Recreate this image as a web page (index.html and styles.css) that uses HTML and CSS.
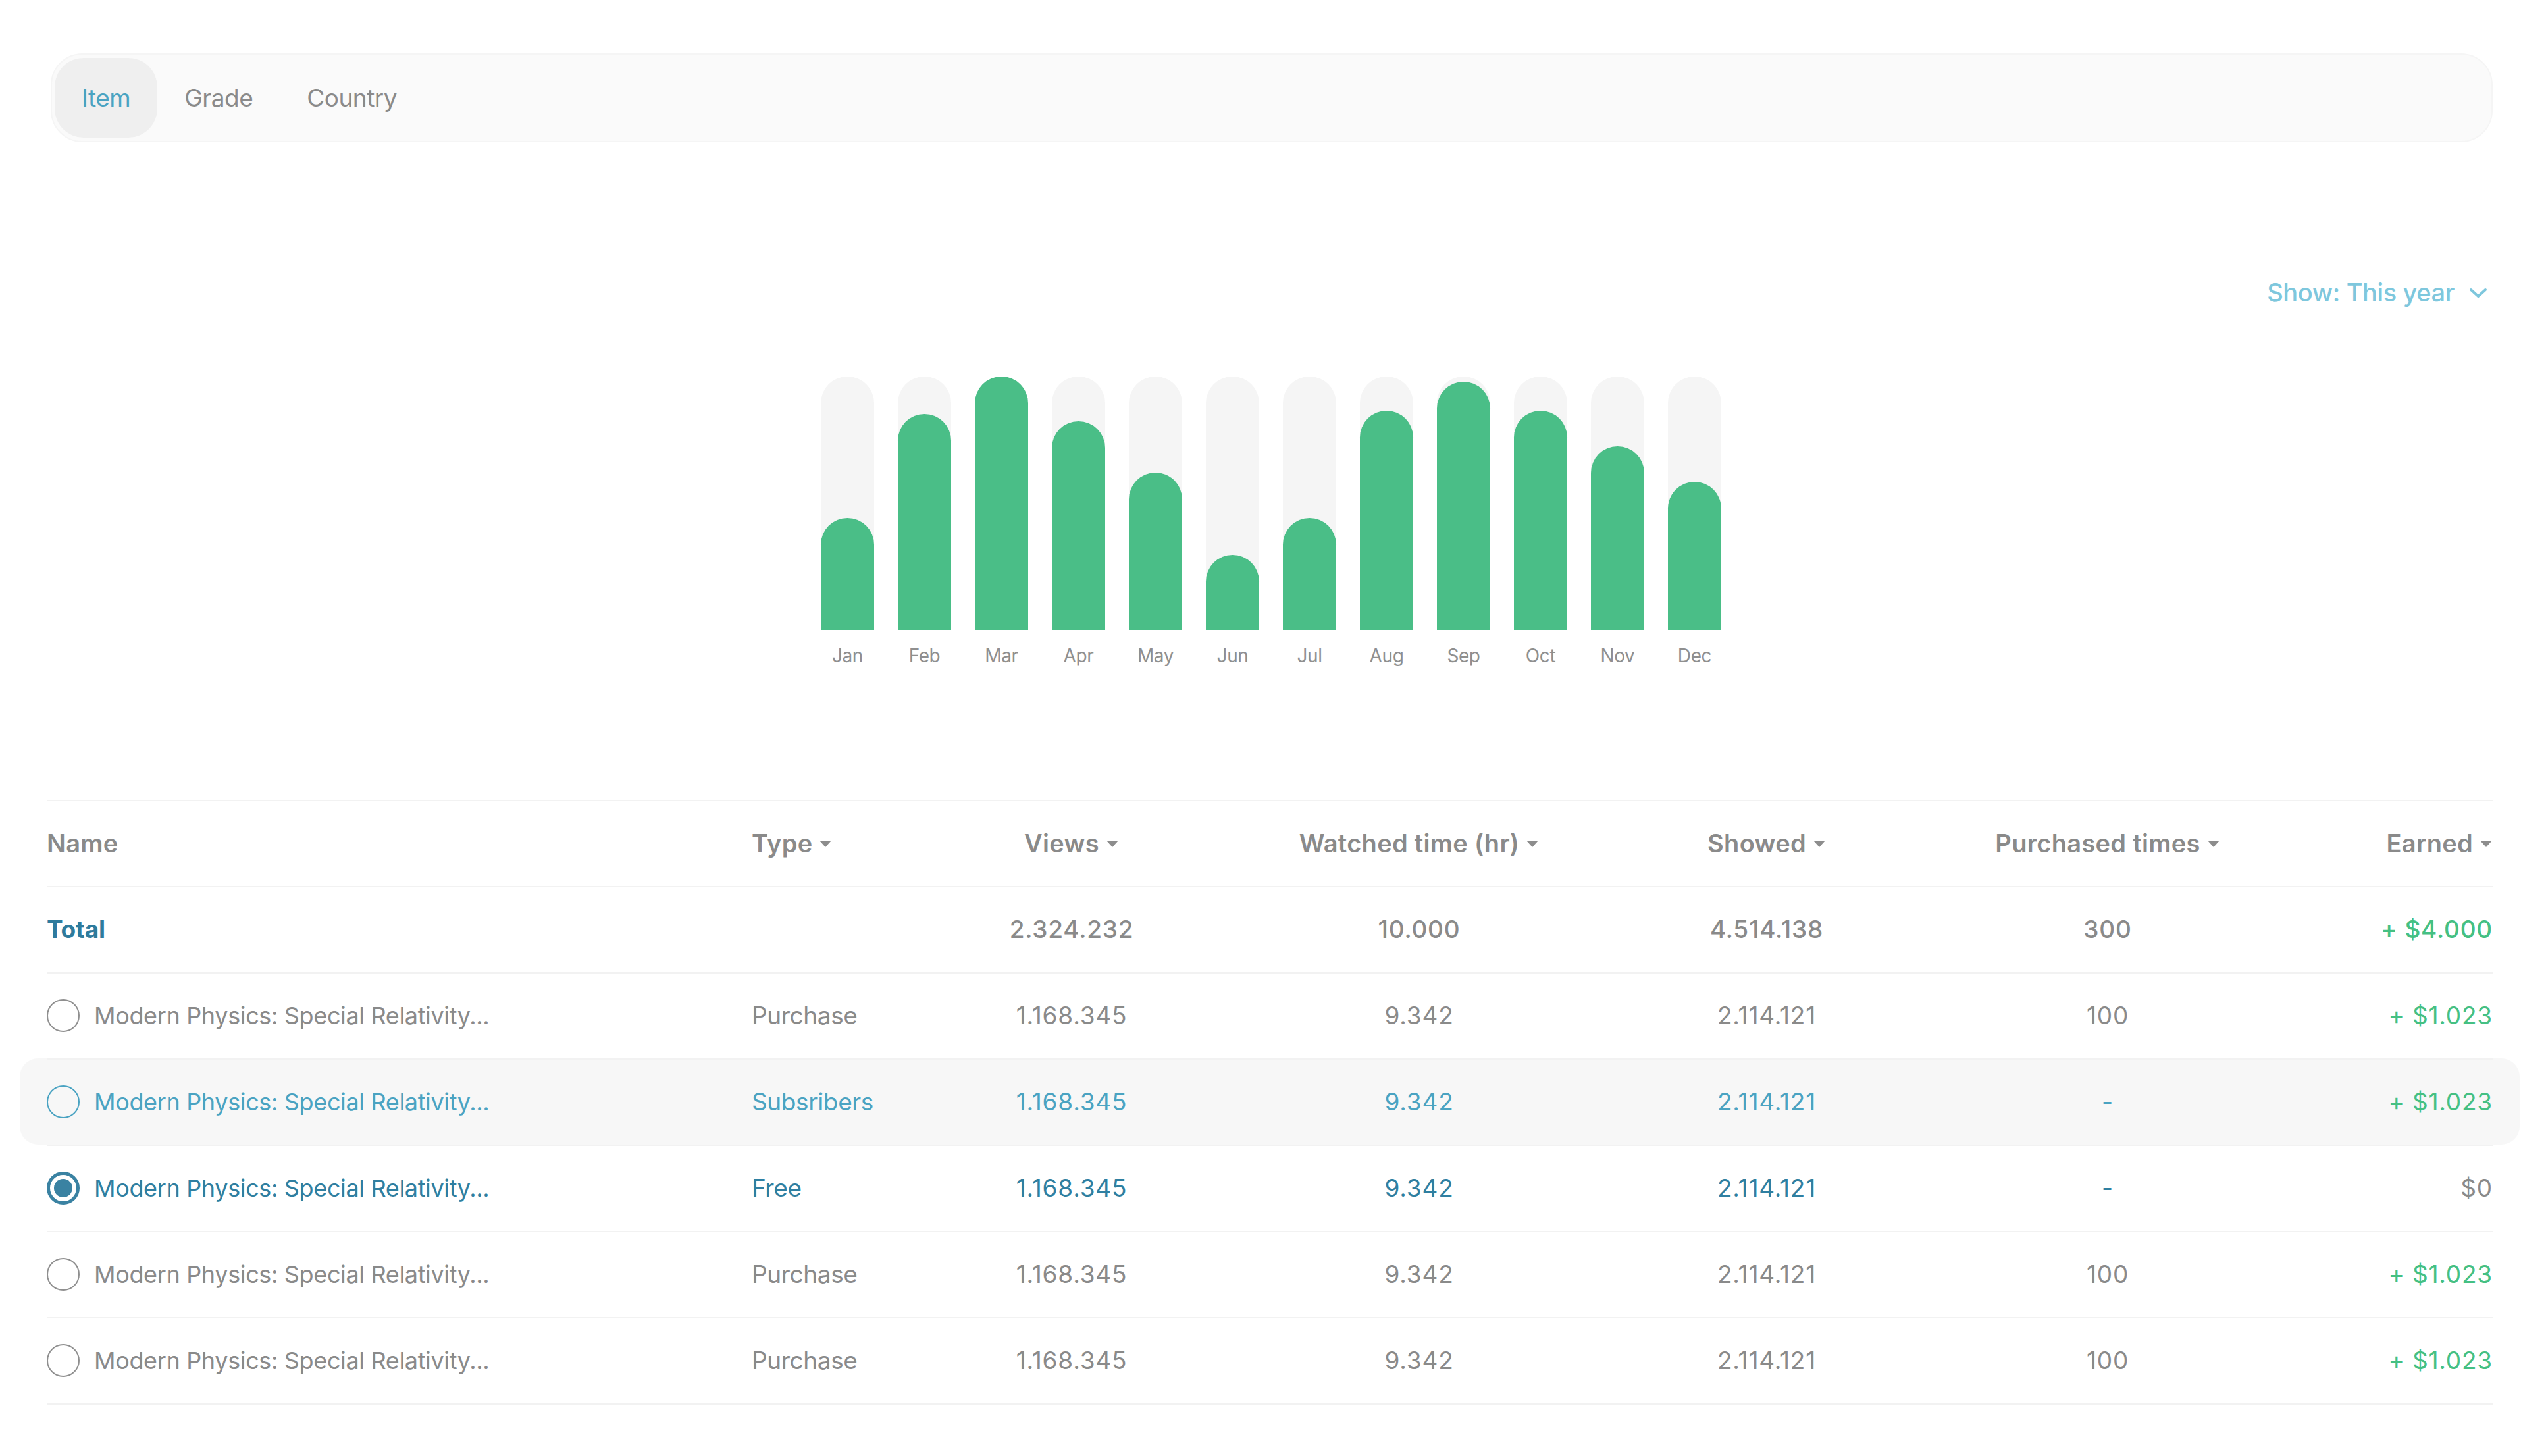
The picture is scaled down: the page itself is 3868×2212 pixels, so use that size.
FILE: index.html
```html
<!DOCTYPE html>
<html lang="en">
<head>
<meta charset="utf-8">
<title>Earnings</title>
<link rel="stylesheet" href="styles.css">
</head>
<body>
<div class="page">
  <nav class="tabs">
    <span class="tab active">Item</span>
    <span class="tab">Grade</span>
    <span class="tab">Country</span>
  </nav>

  <div class="filter">
    <span class="filter-label">Show: This year</span>
    <svg class="chev" width="28" height="16" viewBox="0 0 28 16"><polyline points="3,3 14,13 25,3" fill="none" stroke="#7ec7dd" stroke-width="4" stroke-linecap="round" stroke-linejoin="round"/></svg>
  </div>

  <div class="chart">
    <div class="col"><div class="track"><div class="fill" style="height:44.2%"></div></div><span class="lbl">Jan</span></div>
    <div class="col"><div class="track"><div class="fill" style="height:85.2%"></div></div><span class="lbl">Feb</span></div>
    <div class="col"><div class="track"><div class="fill" style="height:100%"></div></div><span class="lbl">Mar</span></div>
    <div class="col"><div class="track"><div class="fill" style="height:82.3%"></div></div><span class="lbl">Apr</span></div>
    <div class="col"><div class="track"><div class="fill" style="height:62.1%"></div></div><span class="lbl">May</span></div>
    <div class="col"><div class="track"><div class="fill" style="height:29.6%"></div></div><span class="lbl">Jun</span></div>
    <div class="col"><div class="track"><div class="fill" style="height:44.2%"></div></div><span class="lbl">Jul</span></div>
    <div class="col"><div class="track"><div class="fill" style="height:86.5%"></div></div><span class="lbl">Aug</span></div>
    <div class="col"><div class="track"><div class="fill" style="height:97.9%"></div></div><span class="lbl">Sep</span></div>
    <div class="col"><div class="track"><div class="fill" style="height:86.5%"></div></div><span class="lbl">Oct</span></div>
    <div class="col"><div class="track"><div class="fill" style="height:72.5%"></div></div><span class="lbl">Nov</span></div>
    <div class="col"><div class="track"><div class="fill" style="height:58.4%"></div></div><span class="lbl">Dec</span></div>
  </div>

  <div class="table">
    <div class="row head">
      <div class="cell">Name</div>
      <div class="cell"><span class="sort">Type<svg class="tri" viewBox="0 0 20 12"><polygon points="1,1 19,1 10,11" fill="#8d8d8d"/></svg></span></div>
      <div class="cell ctr"><span class="sort">Views<svg class="tri" viewBox="0 0 20 12"><polygon points="1,1 19,1 10,11" fill="#8d8d8d"/></svg></span></div>
      <div class="cell ctr"><span class="sort">Watched time (hr)<svg class="tri" viewBox="0 0 20 12"><polygon points="1,1 19,1 10,11" fill="#8d8d8d"/></svg></span></div>
      <div class="cell ctr"><span class="sort">Showed<svg class="tri" viewBox="0 0 20 12"><polygon points="1,1 19,1 10,11" fill="#8d8d8d"/></svg></span></div>
      <div class="cell ctr"><span class="sort">Purchased times<svg class="tri" viewBox="0 0 20 12"><polygon points="1,1 19,1 10,11" fill="#8d8d8d"/></svg></span></div>
      <div class="cell end"><span class="sort">Earned<svg class="tri" viewBox="0 0 20 12"><polygon points="1,1 19,1 10,11" fill="#8d8d8d"/></svg></span></div>
    </div>

    <div class="row total">
      <div class="cell total-name">Total</div>
      <div class="cell"></div>
      <div class="cell ctr num">2.324.232</div>
      <div class="cell ctr num">10.000</div>
      <div class="cell ctr num">4.514.138</div>
      <div class="cell ctr num">300</div>
      <div class="cell end num green">+ $4.000</div>
    </div>

    <div class="row">
      <div class="cell name"><span class="radio"></span>Modern Physics: Special Relativity...</div>
      <div class="cell">Purchase</div>
      <div class="cell ctr num">1.168.345</div>
      <div class="cell ctr num">9.342</div>
      <div class="cell ctr num">2.114.121</div>
      <div class="cell ctr num">100</div>
      <div class="cell end num green">+ $1.023</div>
    </div>

    <div class="row hover">
      <div class="cell name"><span class="radio"></span>Modern Physics: Special Relativity...</div>
      <div class="cell">Subsribers</div>
      <div class="cell ctr num">1.168.345</div>
      <div class="cell ctr num">9.342</div>
      <div class="cell ctr num">2.114.121</div>
      <div class="cell ctr num">-</div>
      <div class="cell end num green">+ $1.023</div>
    </div>

    <div class="row selected">
      <div class="cell name"><span class="radio"></span>Modern Physics: Special Relativity...</div>
      <div class="cell">Free</div>
      <div class="cell ctr num">1.168.345</div>
      <div class="cell ctr num">9.342</div>
      <div class="cell ctr num">2.114.121</div>
      <div class="cell ctr num">-</div>
      <div class="cell end num gray">$0</div>
    </div>

    <div class="row">
      <div class="cell name"><span class="radio"></span>Modern Physics: Special Relativity...</div>
      <div class="cell">Purchase</div>
      <div class="cell ctr num">1.168.345</div>
      <div class="cell ctr num">9.342</div>
      <div class="cell ctr num">2.114.121</div>
      <div class="cell ctr num">100</div>
      <div class="cell end num green">+ $1.023</div>
    </div>

    <div class="row">
      <div class="cell name"><span class="radio"></span>Modern Physics: Special Relativity...</div>
      <div class="cell">Purchase</div>
      <div class="cell ctr num">1.168.345</div>
      <div class="cell ctr num">9.342</div>
      <div class="cell ctr num">2.114.121</div>
      <div class="cell ctr num">100</div>
      <div class="cell end num green">+ $1.023</div>
    </div>
  </div>
</div>
</body>
</html>
```

FILE: styles.css
```css
* { box-sizing: border-box; }

html, body {
  margin: 0;
  padding: 0;
  background: #ffffff;
}

body {
  font-family: "Inter", "Liberation Sans", sans-serif;
  color: #8a8a8a;
  width: 3868px;
  height: 2212px;
  overflow: hidden;
}

.page {
  padding: 81px 81px 0 71px;
}

/* Tabs */
.tabs {
  margin-left: 6px;
  height: 135px;
  padding: 5px 4px;
  display: flex;
  align-items: stretch;
  background: #fafafa;
  border: 2px solid #f5f5f5;
  border-radius: 48px;
}

.tab {
  display: flex;
  align-items: center;
  padding: 0 41px;
  font-size: 37px;
  color: #8a8a8a;
  border-radius: 44px;
  letter-spacing: -0.5px;
}

.tab.active {
  background: #efefef;
  color: #4aa3c2;
}

/* Filter */
.filter {
  margin-top: 205px;
  height: 46px;
  display: flex;
  justify-content: flex-end;
  align-items: center;
  gap: 22px;
  padding-right: 8px;
}

.filter-label {
  font-size: 38px;
  font-weight: 500;
  color: #7ec7dd;
  letter-spacing: -0.4px;
  line-height: 46px;
}

.chev { display: block; margin-top: 2px; }

/* Chart */
.chart {
  margin-top: 105px;
  display: flex;
  justify-content: center;
  gap: 36px;
  padding-left: 4px;
}

.col {
  width: 81px;
  display: flex;
  flex-direction: column;
  align-items: center;
}

.track {
  width: 81px;
  height: 385px;
  background: #f5f5f5;
  border-radius: 41px 41px 0 0;
  display: flex;
  flex-direction: column;
  justify-content: flex-end;
}

.fill {
  width: 100%;
  background: #4abe87;
  border-radius: 41px 41px 0 0;
}

.lbl {
  margin-top: 22px;
  font-size: 28px;
  line-height: 34px;
  color: #8f8f8f;
  letter-spacing: -0.4px;
}

/* Table */
.table {
  margin-top: 202px;
  border-bottom: 2px solid #f2f2f2;
}

.row {
  display: grid;
  grid-template-columns: 1071px 223px 526px 530px 526px 510px 330px;
  align-items: center;
  height: 131px;
  font-size: 37px;
  letter-spacing: -0.4px;
  color: #8a8a8a;
  background: linear-gradient(#f2f2f2, #f2f2f2) top left / 100% 2px no-repeat;
}

.cell { white-space: nowrap; }
.ctr { text-align: center; }
.end { text-align: right; }

.num {
  letter-spacing: 0.8px;
}

.head {
  font-weight: 600;
  font-size: 38px;
  letter-spacing: 0.3px;
  color: #8a8a8a;
}

.sort {
  display: inline-flex;
  align-items: center;
  gap: 10px;
}

.tri { width: 20px; height: 12px; display: block; margin-top: 2px; }

.total { font-weight: 500; }
.total-name { font-weight: 700; color: #2e7b9d; letter-spacing: -0.2px; }

.green { color: #45c083; }
.gray { color: #8a8a8a; }

.name {
  display: flex;
  align-items: center;
  gap: 22px;
  font-size: 36px;
  letter-spacing: -0.35px;
}

.radio {
  width: 50px;
  height: 50px;
  border-radius: 50%;
  border: 2px solid #8f8f8f;
  flex: none;
}

.hover {
  margin: 0 -41px;
  padding: 0 41px;
  border-radius: 28px;
  color: #4aa3c2;
  background: linear-gradient(#f2f2f2, #f2f2f2) 41px 0 / calc(100% - 82px) 2px no-repeat, #f7f7f7;
}

.hover .radio { border-color: #4aa3c2; }

.selected { color: #2f7fa1; }

.selected .radio {
  border: 5px solid #3a82a2;
  padding: 6px;
  background: #3a82a2;
  background-clip: content-box;
}
```
